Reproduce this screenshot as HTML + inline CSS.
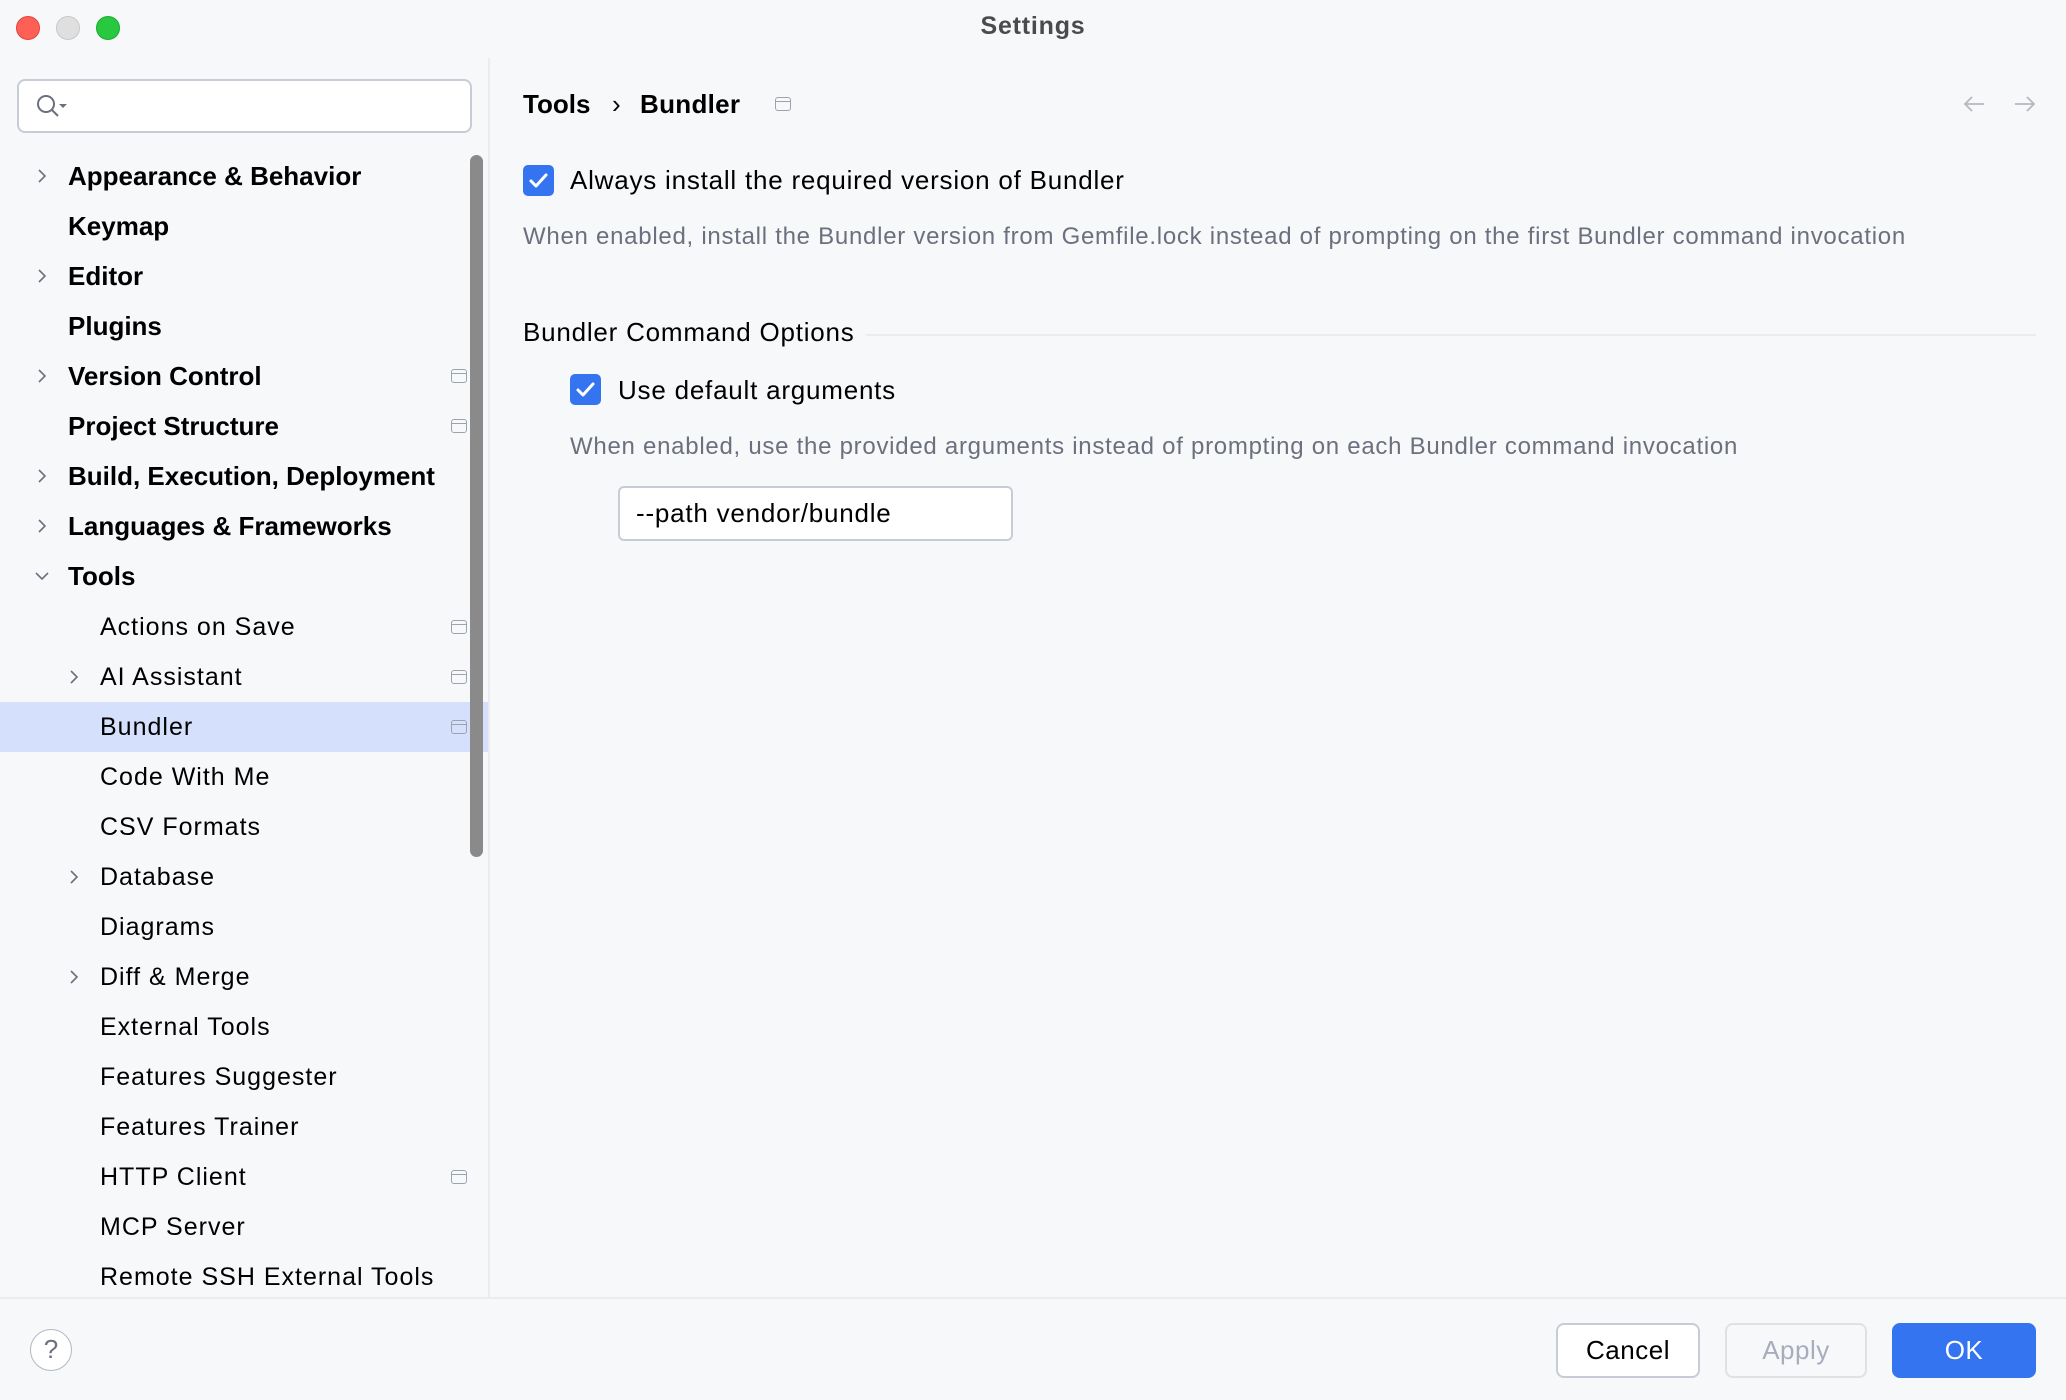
<!DOCTYPE html>
<html><head><meta charset="utf-8"><style>
*{margin:0;padding:0;box-sizing:border-box}
body{width:2066px;height:1400px;background:#f7f8fa;font-family:"Liberation Sans",sans-serif;color:#000;position:relative;overflow:hidden}
.a{position:absolute;white-space:nowrap}
.tl{width:24px;height:24px;border-radius:50%;top:16px}
.row{position:absolute;left:0;width:488px;height:50px;font-size:25px;line-height:50px;letter-spacing:1px}
.row b{font-weight:bold;font-size:26px;letter-spacing:0}
.chev{position:absolute;top:17px;width:16px;height:16px}
.ic{position:absolute;left:451px;top:18px;width:16px;height:14px;border:1.6px solid #9ea2ad;border-radius:3px}
.ic:after{content:"";position:absolute;left:0;right:0;top:3px;border-top:1.6px solid #9ea2ad}
.cb{position:absolute;width:31px;height:31px;border-radius:5px;background:#3574f0}
.lb{font-size:26px;letter-spacing:0.78px}
.ds{font-size:24px;letter-spacing:0.73px;color:#6c707e}
.btn{position:absolute;top:1323px;height:55px;border-radius:8px;font-size:26px;line-height:51px;text-align:center;letter-spacing:0.5px}
</style></head><body>
<div class="a tl" style="left:16px;background:#fe5f57;border:1px solid #e0443e"></div>
<div class="a tl" style="left:56px;background:#dfdfdf;border:1px solid #c8c8c8"></div>
<div class="a tl" style="left:96px;background:#28c840;border:1px solid #1aab29"></div>
<div class="a" style="left:0;width:2066px;top:12px;text-align:center;font-size:25px;letter-spacing:0.8px;font-weight:bold;color:#4b4b4b">Settings</div>

<div class="a" style="left:17px;top:79px;width:455px;height:54px;background:#fff;border:2px solid #c9ccd6;border-radius:8px"></div>
<svg class="a" style="left:34px;top:92px" width="36" height="30" viewBox="0 0 36 30"><circle cx="12" cy="12" r="8" fill="none" stroke="#6c707e" stroke-width="2"/><path d="M18 18l6 6" stroke="#6c707e" stroke-width="2"/><path d="M25 12h8l-4 4z" fill="#6c707e"/></svg>
<div class="a" style="left:488px;top:58px;width:1.5px;height:1240px;background:#ebecf0"></div>

<div class="a" style="left:0;top:702px;width:488px;height:50px;background:#d5e1fc"></div>
<div class="a" style="left:470px;top:155px;width:13px;height:702px;border-radius:7px;background:#8a8a8a"></div>

<div class="a" style="left:0;top:151px;width:488px;height:1147px;overflow:hidden">
<div class="row" style="top:0"><svg class="chev" style="left:34px" viewBox="0 0 16 16"><path d="M5 2l6 6-6 6" fill="none" stroke="#6c707e" stroke-width="1.6"/></svg><b class="a" style="left:68px">Appearance &amp; Behavior</b></div>
<div class="row" style="top:50px"><b class="a" style="left:68px">Keymap</b></div>
<div class="row" style="top:100px"><svg class="chev" style="left:34px" viewBox="0 0 16 16"><path d="M5 2l6 6-6 6" fill="none" stroke="#6c707e" stroke-width="1.6"/></svg><b class="a" style="left:68px">Editor</b></div>
<div class="row" style="top:150px"><b class="a" style="left:68px">Plugins</b></div>
<div class="row" style="top:200px"><svg class="chev" style="left:34px" viewBox="0 0 16 16"><path d="M5 2l6 6-6 6" fill="none" stroke="#6c707e" stroke-width="1.6"/></svg><b class="a" style="left:68px">Version Control</b><div class="ic"></div></div>
<div class="row" style="top:250px"><b class="a" style="left:68px">Project Structure</b><div class="ic"></div></div>
<div class="row" style="top:300px"><svg class="chev" style="left:34px" viewBox="0 0 16 16"><path d="M5 2l6 6-6 6" fill="none" stroke="#6c707e" stroke-width="1.6"/></svg><b class="a" style="left:68px">Build, Execution, Deployment</b></div>
<div class="row" style="top:350px"><svg class="chev" style="left:34px" viewBox="0 0 16 16"><path d="M5 2l6 6-6 6" fill="none" stroke="#6c707e" stroke-width="1.6"/></svg><b class="a" style="left:68px">Languages &amp; Frameworks</b></div>
<div class="row" style="top:400px"><svg class="chev" style="left:34px" viewBox="0 0 16 16"><path d="M2 5l6 6 6-6" fill="none" stroke="#6c707e" stroke-width="1.6"/></svg><b class="a" style="left:68px">Tools</b></div>
<div class="row" style="top:451px"><span class="a" style="left:100px">Actions on Save</span><div class="ic"></div></div>
<div class="row" style="top:501px"><svg class="chev" style="left:66px" viewBox="0 0 16 16"><path d="M5 2l6 6-6 6" fill="none" stroke="#6c707e" stroke-width="1.6"/></svg><span class="a" style="left:100px">AI Assistant</span><div class="ic"></div></div>
<div class="row" style="top:551px"><span class="a" style="left:100px">Bundler</span><div class="ic"></div></div>
<div class="row" style="top:601px"><span class="a" style="left:100px">Code With Me</span></div>
<div class="row" style="top:651px"><span class="a" style="left:100px">CSV Formats</span></div>
<div class="row" style="top:701px"><svg class="chev" style="left:66px" viewBox="0 0 16 16"><path d="M5 2l6 6-6 6" fill="none" stroke="#6c707e" stroke-width="1.6"/></svg><span class="a" style="left:100px">Database</span></div>
<div class="row" style="top:751px"><span class="a" style="left:100px">Diagrams</span></div>
<div class="row" style="top:801px"><svg class="chev" style="left:66px" viewBox="0 0 16 16"><path d="M5 2l6 6-6 6" fill="none" stroke="#6c707e" stroke-width="1.6"/></svg><span class="a" style="left:100px">Diff &amp; Merge</span></div>
<div class="row" style="top:851px"><span class="a" style="left:100px">External Tools</span></div>
<div class="row" style="top:901px"><span class="a" style="left:100px">Features Suggester</span></div>
<div class="row" style="top:951px"><span class="a" style="left:100px">Features Trainer</span></div>
<div class="row" style="top:1001px"><span class="a" style="left:100px">HTTP Client</span><div class="ic"></div></div>
<div class="row" style="top:1051px"><span class="a" style="left:100px">MCP Server</span></div>
<div class="row" style="top:1101px"><span class="a" style="left:100px">Remote SSH External Tools</span></div>
</div>

<!-- main -->
<div class="a" style="left:523px;top:89px;font-size:26px;font-weight:bold">Tools</div>
<div class="a" style="left:612px;top:89px;font-size:26px">›</div>
<div class="a" style="left:640px;top:89px;font-size:26px;font-weight:bold;letter-spacing:0.3px">Bundler</div>
<div class="a" style="left:775px;top:97px;width:16px;height:14px;border:1.6px solid #9ea2ad;border-radius:3px"><div style="position:absolute;left:0;right:0;top:3px;border-top:1.6px solid #9ea2ad"></div></div>
<svg class="a" style="left:1962px;top:94px" width="24" height="20" viewBox="0 0 24 20"><path d="M22 10H3M10 3l-7 7 7 7" fill="none" stroke="#b4b8bf" stroke-width="1.8"/></svg>
<svg class="a" style="left:2013px;top:94px" width="24" height="20" viewBox="0 0 24 20"><path d="M2 10h19M14 3l7 7-7 7" fill="none" stroke="#b4b8bf" stroke-width="1.8"/></svg>

<div class="cb" style="left:523px;top:165px"><svg width="31" height="31" viewBox="0 0 31 31"><path d="M8 16l5 5 10-11" fill="none" stroke="#fff" stroke-width="3" stroke-linecap="round" stroke-linejoin="round"/></svg></div>
<div class="a lb" style="left:570px;top:165px">Always install the required version of Bundler</div>
<div class="a ds" style="left:523px;top:223px">When enabled, install the Bundler version from Gemfile.lock instead of prompting on the first Bundler command invocation</div>

<div class="a lb" style="left:523px;top:317px">Bundler Command Options</div>
<div class="a" style="left:866px;top:334px;width:1170px;height:1.5px;background:#ebecf0"></div>
<div class="cb" style="left:570px;top:374px"><svg width="31" height="31" viewBox="0 0 31 31"><path d="M8 16l5 5 10-11" fill="none" stroke="#fff" stroke-width="3" stroke-linecap="round" stroke-linejoin="round"/></svg></div>
<div class="a lb" style="left:618px;top:375px">Use default arguments</div>
<div class="a ds" style="left:570px;top:433px">When enabled, use the provided arguments instead of prompting on each Bundler command invocation</div>
<div class="a lb" style="left:618px;top:486px;width:395px;height:55px;background:#fff;border:2px solid #c9ccd6;border-radius:6px;line-height:51px;padding-left:16px">--path vendor/bundle</div>

<!-- bottom -->
<div class="a" style="left:0;top:1297px;width:2066px;height:1.5px;background:#ebecf0"></div>
<div class="a" style="left:30px;top:1329px;width:42px;height:42px;border-radius:50%;border:1.6px solid #b4b8bf;background:#fff;text-align:center;font-size:26px;line-height:39px;color:#6c707e">?</div>
<div class="btn" style="left:1556px;width:144px;background:#fff;border:2px solid #c9ccd6">Cancel</div>
<div class="btn" style="left:1725px;width:142px;border:2px solid #dfe1e5;color:#a8adbd">Apply</div>
<div class="btn" style="left:1892px;width:144px;background:#3574f0;color:#fff;border:2px solid #3574f0">OK</div>
</body></html>
